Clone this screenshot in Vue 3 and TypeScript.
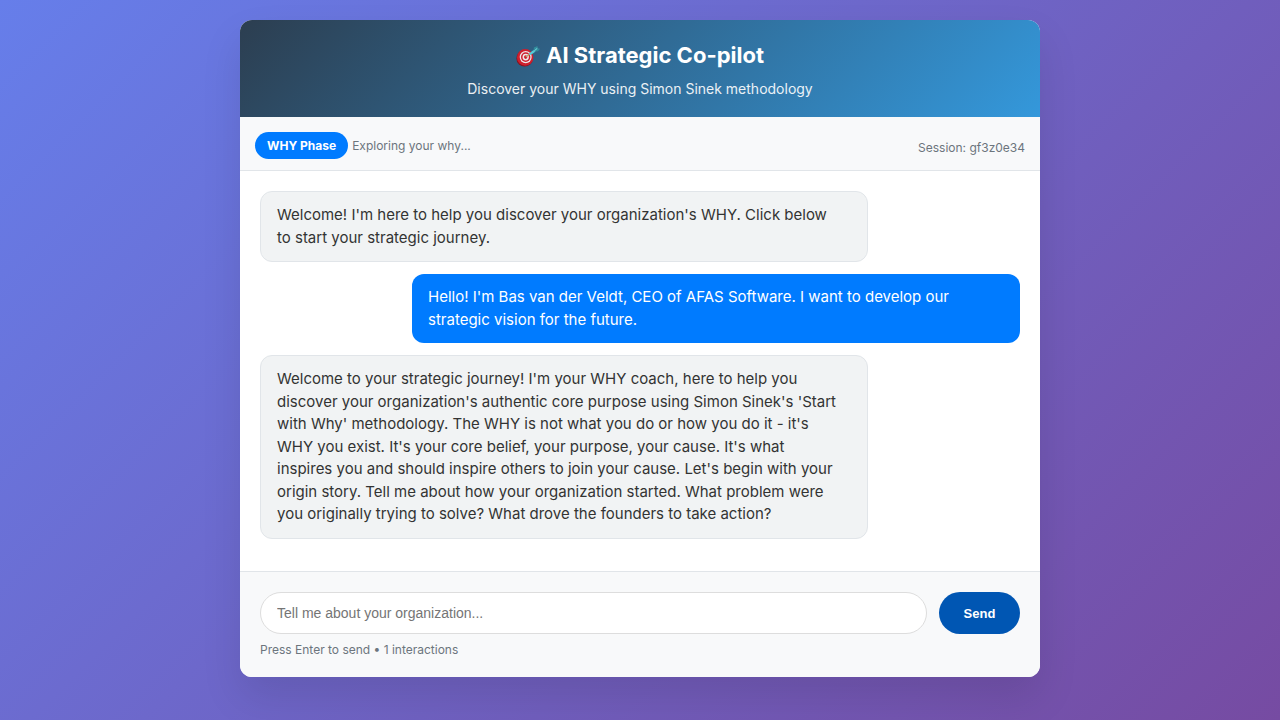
<script setup lang="ts">
import { ref } from 'vue'

interface Message {
  id: number
  author: 'coach' | 'user'
  text: string
}

const sessionId = 'gf3z0e34'
const interactions = ref(1)
const draft = ref('')
const messages = ref<Message[]>([
  {
    id: 1,
    author: 'coach',
    text: "Welcome! I'm here to help you discover your organization's WHY. Click below to start your strategic journey.",
  },
  {
    id: 2,
    author: 'user',
    text: "Hello! I'm Bas van der Veldt, CEO of AFAS Software. I want to develop our strategic vision for the future.",
  },
  {
    id: 3,
    author: 'coach',
    text: "Welcome to your strategic journey! I'm your WHY coach, here to help you discover your organization's authentic core purpose using Simon Sinek's 'Start with Why' methodology. The WHY is not what you do or how you do it - it's WHY you exist. It's your core belief, your purpose, your cause. It's what inspires you and should inspire others to join your cause. Let's begin with your origin story. Tell me about how your organization started. What problem were you originally trying to solve? What drove the founders to take action?",
  },
])

function send(): void {
  const text = draft.value.trim()
  if (!text) return
  messages.value.push({ id: messages.value.length + 1, author: 'user', text })
  interactions.value += 1
  draft.value = ''
}
</script>

<template>
  <div class="page">
    <main class="card">
      <header class="header">
        <h1 class="title">
          <svg class="target" viewBox="0 0 24 24" aria-hidden="true">
            <ellipse cx="8.6" cy="15.4" rx="8.2" ry="8.2" fill="#861420" />
            <ellipse cx="9.2" cy="14.4" rx="8.2" ry="8.3" fill="#cf1f2d" />
            <ellipse cx="9.7" cy="14.1" rx="6" ry="6.2" fill="#eee6e9" />
            <ellipse cx="9.7" cy="14.1" rx="4.7" ry="4.9" fill="#cf1f2d" />
            <ellipse cx="9.7" cy="14.1" rx="3.2" ry="3.4" fill="#eee6e9" />
            <ellipse cx="9.7" cy="14.1" rx="1.7" ry="1.8" fill="#cf1f2d" />
            <path d="M9.8 14 14.2 10.8" stroke="#b9a36a" stroke-width="1.2" />
            <path d="M12.8 10.6 18 6.8 19.6 8.6 14.4 12.2Z" fill="#56cbd6" />
            <path d="M17.6 7.4 17.9 4.6 21.6 3 21.2 5.2 24 5.8 22 8.2 18.8 8.6Z" fill="#318b9c" />
            <path d="M18.2 8 21.4 5.2" stroke="#7be0e4" stroke-width="1" />
          </svg>
          <span>AI Strategic Co-pilot</span>
        </h1>
        <p class="subtitle">Discover your WHY using Simon Sinek methodology</p>
      </header>

      <section class="status" aria-label="Session status">
        <div class="phase">
          <span class="badge">WHY Phase</span>
          <span>Exploring your why...</span>
        </div>
        <span class="session">Session: {{ sessionId }}</span>
      </section>

      <section class="chat" aria-label="Conversation">
        <p v-for="m in messages" :key="m.id" class="message" :class="m.author">{{ m.text }}</p>
      </section>

      <footer class="composer">
        <form class="row" @submit.prevent="send">
          <input
            v-model="draft"
            class="field"
            type="text"
            aria-label="Message"
            placeholder="Tell me about your organization..."
          />
          <button class="send" type="submit">Send</button>
        </form>
        <p class="hint">Press Enter to send • {{ interactions }} interactions</p>
      </footer>
    </main>
  </div>
</template>

<style>
body {
  margin: 0;
}
</style>

<style scoped>
.page {
  box-sizing: border-box;
  min-height: 100vh;
  padding: 20px;
  background: linear-gradient(135deg, #667eea 0%, #764ba2 100%);
  font-family: Inter, "Liberation Sans", sans-serif;
  color: #333;
}
.card {
  max-width: 800px;
  margin: 0 auto;
  overflow: hidden;
  border-radius: 12px;
  background: #fff;
  box-shadow: 0 20px 40px rgba(0, 0, 0, 0.1);
}
.header {
  padding: 20px;
  background: linear-gradient(135deg, #2c3e50 0%, #3498db 100%);
  color: #fff;
  text-align: center;
}
.title {
  display: flex;
  align-items: center;
  justify-content: center;
  gap: 6px;
  margin: 0 0 10px;
  font-size: 22px;
  font-weight: 700;
  line-height: 30px;
}
.target {
  width: 24px;
  height: 24px;
}
.subtitle {
  margin: 0;
  font-size: 14px;
  line-height: 17px;
  opacity: 0.9;
}
.status {
  display: flex;
  justify-content: space-between;
  padding: 15px 15px 11px;
  border-bottom: 1px solid #e1e5e9;
  background: #f8f9fa;
  color: #6c757d;
  font-size: 12px;
}
.phase {
  display: flex;
  align-items: center;
  gap: 4px;
}
.badge {
  padding: 6px 12px;
  border-radius: 20px;
  background: #007bff;
  color: #fff;
  font-weight: 700;
  line-height: 15px;
}
.session {
  align-self: flex-end;
  line-height: 22px;
}
.chat {
  display: flex;
  flex-direction: column;
  gap: 12px;
  box-sizing: border-box;
  min-height: 400px;
  padding: 20px;
}
.message {
  box-sizing: border-box;
  width: 80%;
  margin: 0;
  padding: 12px 28px 12px 16px;
  border-radius: 12px;
  font-size: 15px;
  line-height: 1.5;
}
.coach {
  align-self: flex-start;
  border: 1px solid #e1e5e9;
  background: #f1f3f4;
}
.user {
  align-self: flex-end;
  background: #007bff;
  color: #fff;
}
.composer {
  padding: 20px;
  border-top: 1px solid #e1e5e9;
  background: #f8f9fa;
}
.row {
  display: flex;
  gap: 12px;
}
.field {
  flex: 1;
  min-width: 0;
  box-sizing: border-box;
  height: 42px;
  padding: 0 16px;
  border: 1px solid #ddd;
  border-radius: 24px;
  outline: none;
  background: #fff;
  color: #333;
  font-family: "Liberation Sans", Arial, sans-serif;
  font-size: 14px;
}
.field::placeholder {
  color: #757575;
}
.send {
  min-width: 81px;
  padding: 0 16px;
  border: 0;
  border-radius: 24px;
  background: #0056b3;
  color: #fff;
  font-family: "Liberation Sans", Arial, sans-serif;
  font-size: 13px;
  font-weight: 700;
  cursor: pointer;
}
.hint {
  margin: 8px 0 0;
  color: #6c757d;
  font-size: 12px;
  line-height: 15px;
}
</style>
